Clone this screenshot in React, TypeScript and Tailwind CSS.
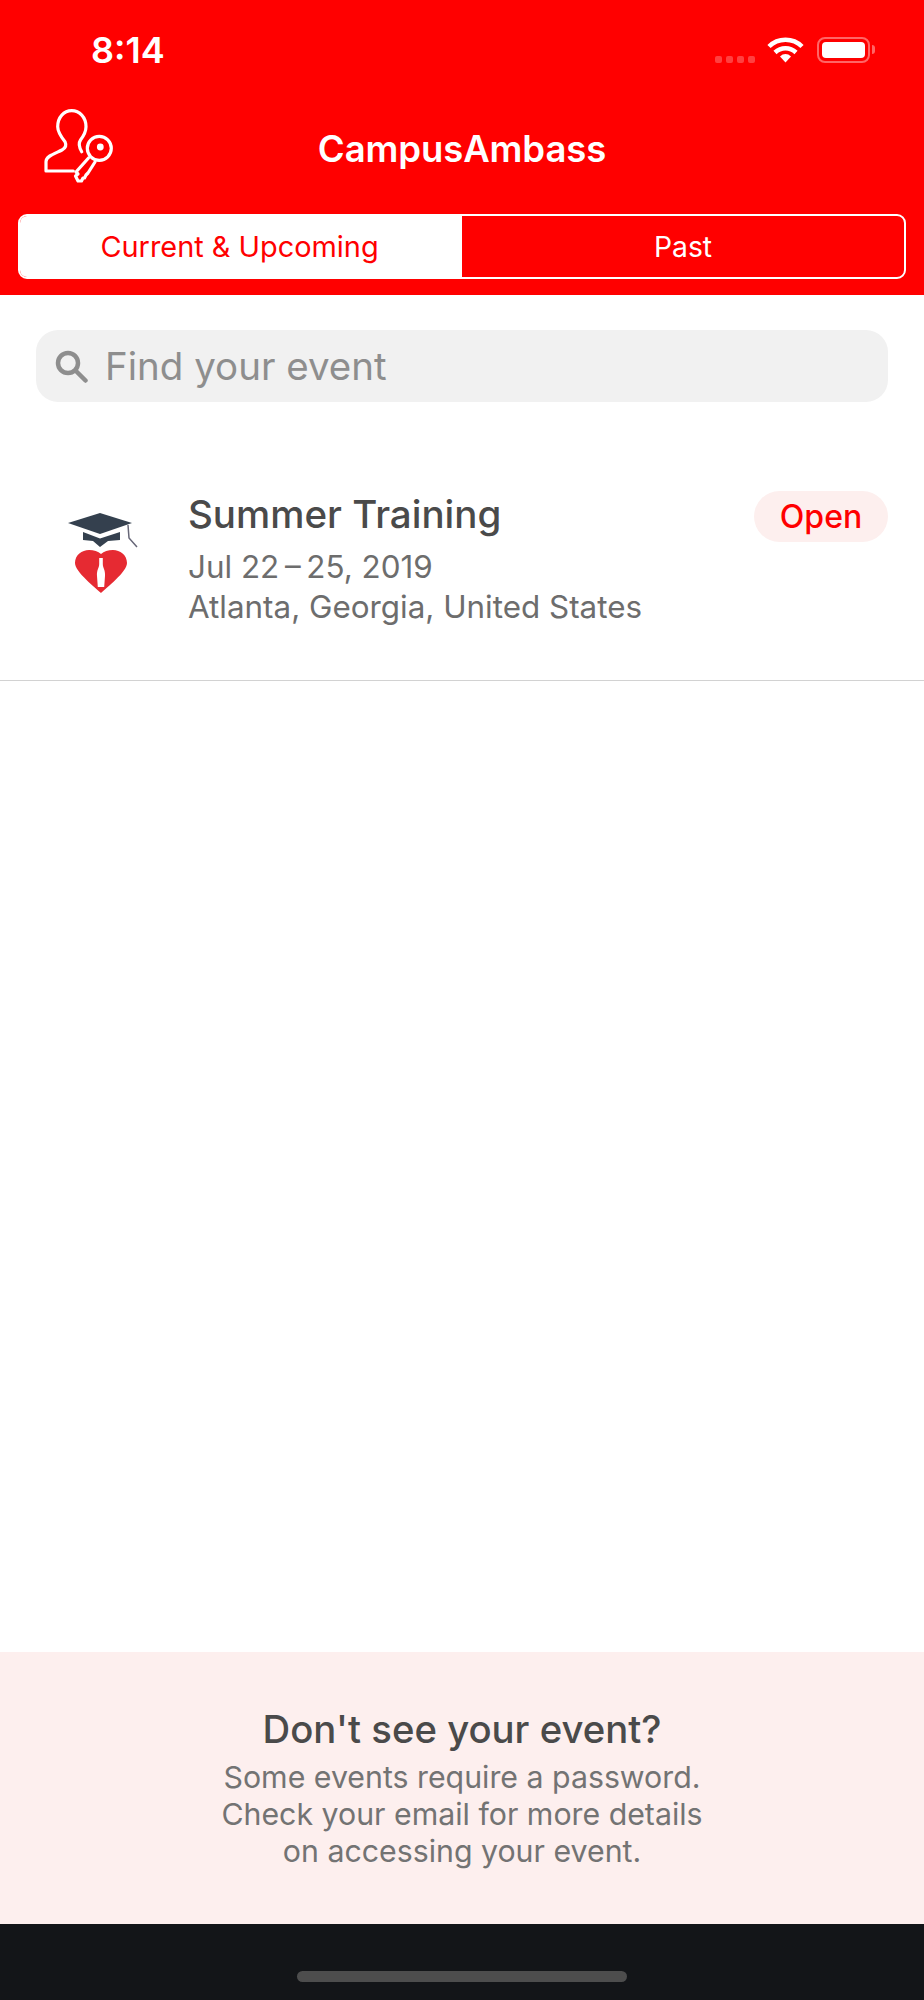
export default function App() {
  return (
    <div className="relative flex h-[2000px] w-[924px] flex-col overflow-hidden bg-white font-['Inter','Liberation_Sans',sans-serif]">
      <header className="flex h-[295px] flex-col bg-[#ff0000] text-white">
        <div className="flex h-[100px] items-start justify-between pl-[91px] pr-[54px] pt-[29px]">
          <span className="text-[36px] font-semibold leading-[42px]">8:14</span>
          <div className="flex items-start pt-[8px]">
            <div className="mr-[12px] mt-[19px] flex gap-[4px]">
              <i className="h-[7px] w-[7px] rounded-[2px] bg-white/25" />
              <i className="h-[7px] w-[7px] rounded-[2px] bg-white/25" />
              <i className="h-[7px] w-[7px] rounded-[2px] bg-white/25" />
              <i className="h-[7px] w-[7px] rounded-[2px] bg-white/25" />
            </div>
            <svg width="37" height="26" viewBox="0 0 36 26" className="mr-[13px]">
              <path d="M1.500 9.500C10.500 .5 25.500 .5 34.500 9.500" fill="none" stroke="#fff" strokeWidth="4.500" />
              <path d="M7.500 15.500C13.500 9.800 22.500 9.800 28.500 15.500" fill="none" stroke="#fff" strokeWidth="4.500" />
              <path d="M12.500 19.500C15.800 16.200 20.200 16.200 23.500 19.500L18 25.500Z" fill="#fff" />
            </svg>
            <div className="relative h-[26px] w-[53px] rounded-[8px] border-2 border-white/40 p-[3px]">
              <div className="h-full w-full rounded-[4px] bg-white" />
              <span className="absolute right-[-7px] top-[6px] h-[9px] w-[3px] rounded-r-full bg-white/40" />
            </div>
          </div>
        </div>
        <div className="relative flex h-[114px] items-center justify-center pb-[17px]">
          <svg width="72" height="78" viewBox="0 0 72 78" className="absolute left-[42px] top-[7px]" fill="none" stroke="#fff" strokeWidth="3.200" strokeLinecap="round" strokeLinejoin="round">
            <path d="M31.300 64H4V54.700C4 49 13 46.500 20 43C24 41 24.500 38 23 34.700C18.500 29 15.700 24.500 15.700 19.700C15.700 10 22 3.700 29.700 3.700C37.500 3.700 44 10 44 19.700C44 24.500 41.500 29 38.500 33C36.500 36 37.500 41 39.700 44.700" />
            <circle cx="57.300" cy="41.300" r="12" />
            <circle cx="58.300" cy="40" r="1.800" fill="#fff" />
            <path d="M46.500 51L34 65L36 67L33.500 69L36 74L39.500 74L41 71L42.500 71L44 68L46 66L53 55" />
          </svg>
          <h1 className="text-[36.500px] font-semibold leading-[42px] tracking-[-0.1px]">CampusAmbass</h1>
        </div>
        <div className="mx-[18px] flex h-[65px] overflow-hidden rounded-[9px] border-2 border-white leading-[34px]">
          <div className="flex w-1/2 items-center justify-center bg-white pr-[3px] text-[28.900px] text-[#ff0000]">Current &amp; Upcoming</div>
          <div className="flex w-1/2 items-center justify-center text-[28.300px]">Past</div>
        </div>
      </header>

      <main className="flex flex-1 flex-col">
        <div className="mx-[36px] mt-[35px] flex h-[72px] items-center rounded-[22px] bg-[#f1f1f1] pl-[18px]">
          <svg width="34" height="34" viewBox="0 0 34 34" fill="none" stroke="#8e8e8e" strokeWidth="4.500" strokeLinecap="round">
            <circle cx="14" cy="14" r="10" />
            <path d="M22 22L31.500 31.500" />
          </svg>
          <span className="ml-[17px] text-[38.500px] leading-[44px] text-[#8e8e8e]">Find your event</span>
        </div>

        <div className="flex h-[279px] border-b border-[#d2d2d2] pl-[64px] pr-[36px]">
          <svg width="76" height="88" viewBox="0 0 76 88" className="mt-[108px] shrink-0">
            <path d="M4 13L36 3L68 13L36 24Z" fill="#34404e" />
            <path d="M19 22L19 30L29 31L36 37L44 31L56 30L56 22L36 28.500Z" fill="#34404e" />
            <path d="M64 15L65 28L73 37" stroke="#667" strokeWidth="1.500" fill="none" />
            <path d="M37 83C32 78 11 62 11 53C11 45 18 40 25 40C30 40 34 41.500 37 44C40 41.500 44 40 49 40C56 40 63 45 63 53C63 62 42 78 37 83Z" fill="#e62a32" />
            <path d="M35.200 48L38.800 48L38.800 54C38.800 58 41.500 60 41 66L40.200 77L33.800 77L33 66C32.500 60 35.200 58 35.200 54Z" fill="#fff" />
          </svg>
          <div className="ml-[48px] mt-[89px] flex-1">
            <div className="text-[38.500px] font-medium leading-[46px] text-[#4a4a4a]">Summer Training</div>
            <div className="mt-[10px] text-[31.400px] leading-[40px] text-[#6d6d6d]">Jul 22{"\u2009"}–{"\u2009"}25, 2019</div>
            <div className="text-[31.400px] leading-[40px] text-[#6d6d6d]">Atlanta, Georgia, United States</div>
          </div>
          <div className="mt-[89px] flex h-[51px] w-[134px] items-center justify-center rounded-full bg-[#fdefee] text-[32px] font-medium text-[#ff0000]">Open</div>
        </div>
        <div className="flex-1" />
      </main>

      <footer className="flex h-[272px] flex-col items-center bg-[#fdefee] pt-[54px] text-center">
        <h2 className="text-[38.300px] font-medium leading-[46px] text-[#4a4a4a]">Don&apos;t see your event?</h2>
        <p className="mt-[7px] text-[30.300px] leading-[37px] text-[#737373]">
          Some events require a password.<br />Check your email for more details<br />on accessing your event.
        </p>
      </footer>
      <div className="flex h-[76px] justify-center bg-[#131518] pt-[47px]">
        <div className="h-[11px] w-[330px] rounded-full bg-[#4d4d4d]" />
      </div>
    </div>
  );
}
